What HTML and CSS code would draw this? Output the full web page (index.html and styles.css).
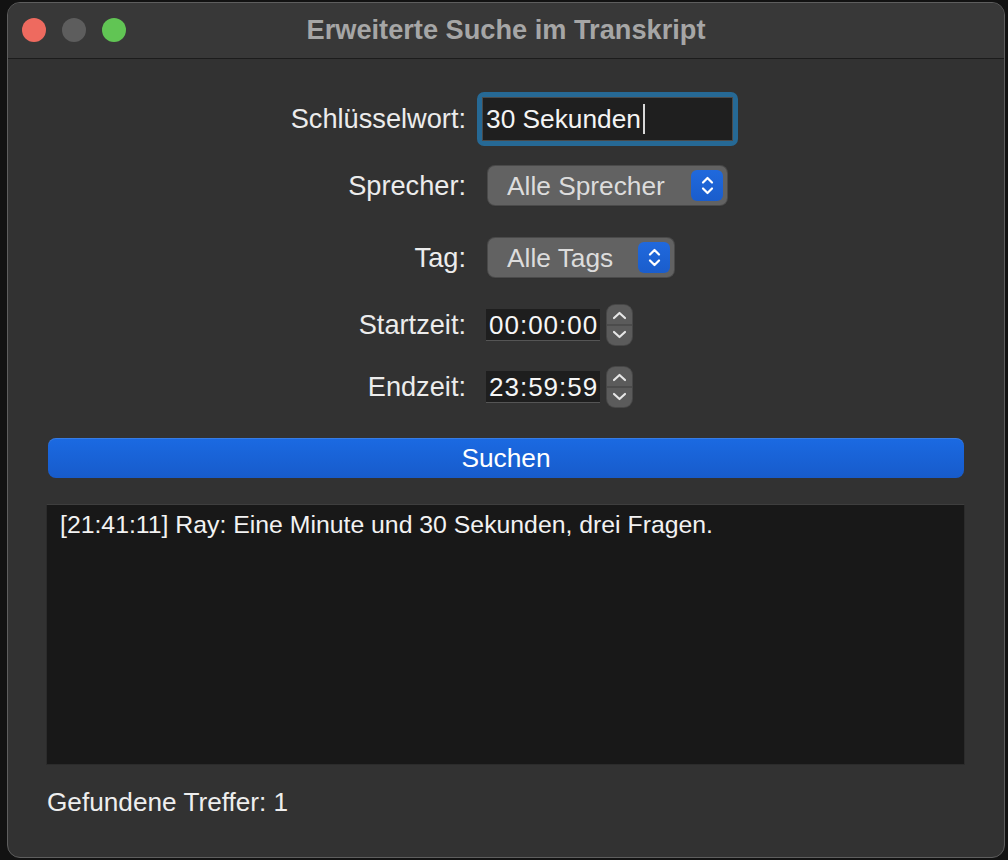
FILE: index.html
```html
<!DOCTYPE html>
<html lang="de">
<head>
<meta charset="utf-8">
<title>Erweiterte Suche im Transkript</title>
<link rel="stylesheet" href="styles.css">
</head>
<body>
<div class="window">
  <div class="titlebar">
    <div class="lights">
      <span class="light red"></span>
      <span class="light gray"></span>
      <span class="light green"></span>
    </div>
    <div class="title">Erweiterte Suche im Transkript</div>
  </div>
  <div class="content">
    <div class="row row-keyword">
      <div class="label">Schlüsselwort:</div>
      <div class="focus-ring">
        <div class="textfield">30 Sekunden<span class="caret"></span></div>
      </div>
    </div>
    <div class="row row-speaker">
      <div class="label">Sprecher:</div>
      <div class="popup popup-wide">
        <span class="popup-text">Alle Sprecher</span>
        <span class="chip">
          <svg width="31" height="31" viewBox="0 0 31 31"><path d="M11 12.5 L15.5 8 L20 12.5 M11 18.5 L15.5 23 L20 18.5" fill="none" stroke="#fff" stroke-width="2.2" stroke-linecap="round" stroke-linejoin="round"/></svg>
        </span>
      </div>
    </div>
    <div class="row row-tag">
      <div class="label">Tag:</div>
      <div class="popup popup-narrow">
        <span class="popup-text">Alle Tags</span>
        <span class="chip">
          <svg width="31" height="31" viewBox="0 0 31 31"><path d="M11 12.5 L15.5 8 L20 12.5 M11 18.5 L15.5 23 L20 18.5" fill="none" stroke="#fff" stroke-width="2.2" stroke-linecap="round" stroke-linejoin="round"/></svg>
        </span>
      </div>
    </div>
    <div class="row row-start">
      <div class="label">Startzeit:</div>
      <div class="timefield">00:00:00</div>
      <div class="stepper">
        <svg width="25" height="40" viewBox="0 0 25 40"><path d="M7 13 L12.5 8 L18 13 M7 27 L12.5 32 L18 27" fill="none" stroke="#e6e6e6" stroke-width="2.2" stroke-linecap="round" stroke-linejoin="round"/><line x1="0" y1="20" x2="25" y2="20" stroke="#474747" stroke-width="1.5"/></svg>
      </div>
    </div>
    <div class="row row-end">
      <div class="label">Endzeit:</div>
      <div class="timefield">23:59:59</div>
      <div class="stepper">
        <svg width="25" height="40" viewBox="0 0 25 40"><path d="M7 13 L12.5 8 L18 13 M7 27 L12.5 32 L18 27" fill="none" stroke="#e6e6e6" stroke-width="2.2" stroke-linecap="round" stroke-linejoin="round"/><line x1="0" y1="20" x2="25" y2="20" stroke="#474747" stroke-width="1.5"/></svg>
      </div>
    </div>
    <div class="search-button">Suchen</div>
    <div class="results">
      <div class="result-line">[21:41:11] Ray: Eine Minute und 30 Sekunden, drei Fragen.</div>
    </div>
    <div class="footer">Gefundene Treffer: 1</div>
  </div>
</div>
</body>
</html>
```

FILE: styles.css
```css
* { box-sizing: border-box; }

html, body {
  margin: 0;
  padding: 0;
  background: #121212;
  width: 1008px;
  height: 860px;
  overflow: hidden;
  font-family: "Liberation Sans", Arial, sans-serif;
}

.window {
  margin: 2px 0 0 7px;
  width: 998px;
  height: 856px;
  border: 1px solid #5e5e5e;
  border-radius: 13px;
  background: #323232;
  overflow: hidden;
  display: flex;
  flex-direction: column;
}

.titlebar {
  height: 56px;
  flex: none;
  background: #383838;
  border-bottom: 1px solid #1c1c1c;
  display: flex;
  align-items: center;
  position: relative;
}

.lights {
  display: flex;
  gap: 16px;
  padding-left: 14px;
  margin-top: -2px;
}

.light {
  width: 24px;
  height: 24px;
  border-radius: 50%;
  display: block;
}
.light.red { background: #ee6a5f; }
.light.gray { background: #5d5d5d; }
.light.green { background: #61c554; }

.title {
  position: absolute;
  left: 0;
  right: 0;
  top: 12px;
  text-align: center;
  font-weight: bold;
  font-size: 27.2px;
  color: #a6a6a6;
  line-height: 30px;
}

.content {
  flex: 1;
  display: flex;
  flex-direction: column;
  padding-top: 33px;
}

.row {
  display: flex;
  align-items: center;
}

.label {
  width: 458px;
  text-align: right;
  font-size: 27.2px;
  color: #ececec;
  margin-right: 11px;
  line-height: 30px;
}

.row-keyword { height: 54px; }
.row-speaker { height: 39px; margin-top: 20px; }
.row-tag { height: 39px; margin-top: 33px; }
.row-start { height: 40px; margin-top: 28px; }
.row-end { height: 40px; margin-top: 22px; }

.focus-ring {
  width: 261px;
  height: 54px;
  border: 5px solid #266995;
  border-radius: 7px;
}

.textfield {
  height: 100%;
  background: #1f1f1f;
  border: 1px solid #4a4a4a;
  font-size: 26.3px;
  color: #f4f4f4;
  padding-left: 3px;
  line-height: 40px;
  display: flex;
  align-items: center;
}

.caret {
  display: inline-block;
  width: 2px;
  height: 30px;
  background: #d8d8d8;
  margin-left: 2px;
}

.popup {
  margin-left: 11px;
  height: 39px;
  background: #626262;
  border-radius: 7px;
  box-shadow: 0 0 0 1px #4a4a4a, 0 1px 1px rgba(0,0,0,0.3);
  display: flex;
  align-items: center;
  justify-content: space-between;
  padding-left: 19px;
  padding-right: 4px;
}
.popup-wide { width: 239px; }
.popup-narrow { width: 186px; }

.popup-text {
  font-size: 26.3px;
  color: #dcdcdc;
  line-height: 30px;
}

.chip {
  width: 32px;
  height: 31px;
  border-radius: 6px;
  background: linear-gradient(#2069dd, #1a5dcc);
  display: flex;
  align-items: center;
  justify-content: center;
}

.timefield {
  margin-left: 9px;
  width: 114px;
  height: 32px;
  background: #1e1e1e;
  border-bottom: 1px solid #555;
  font-size: 26px;
  color: #f6f6f6;
  line-height: 32px;
  padding-left: 3px;
  letter-spacing: 1px;
  white-space: nowrap;
}

.stepper {
  margin-left: 7px;
  width: 25px;
  height: 40px;
  background: #5b5b5b;
  border-radius: 8px;
  box-shadow: 0 0 0 1px #474747;
  overflow: hidden;
}
.stepper svg { display: block; }

.search-button {
  margin: 31px 40px 0 40px;
  height: 40px;
  border-radius: 8px;
  background: linear-gradient(#1b6ae2, #175bcb);
  box-shadow: inset 0 1px 0 rgba(255,255,255,0.12);
  color: #ffffff;
  font-size: 26.3px;
  text-align: center;
  line-height: 40px;
}

.results {
  margin: 26px 0 0 38px;
  width: 919px;
  height: 261px;
  background: #181818;
  border: 1px solid #2b2b2b;
  border-top-color: #3e3e3e;
  padding: 6px 13px;
}

.result-line {
  font-size: 24.8px;
  color: #f2f2f2;
  line-height: 28px;
  white-space: nowrap;
}

.footer {
  margin: 22px 0 0 39px;
  font-size: 26.2px;
  color: #eeeeee;
  line-height: 30px;
}
```
